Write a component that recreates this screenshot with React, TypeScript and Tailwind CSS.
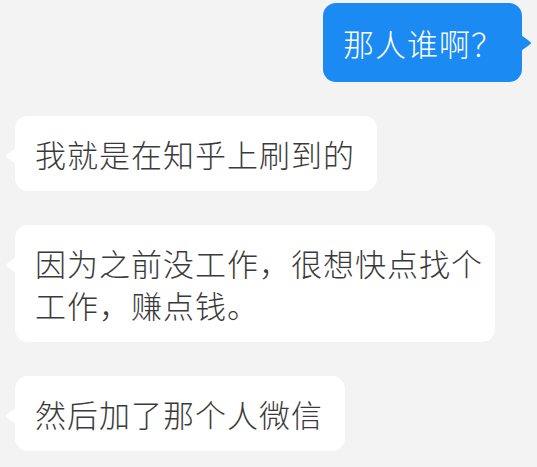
import React from 'react';

type Msg = { text: React.ReactNode; mine?: boolean; tight?: boolean };

const messages: Msg[] = [
  { text: '那人谁啊？', mine: true },
  { text: '我就是在知乎上刷到的' },
  { text: <>因为之前没工作，很想快点找个<br />工作，赚点钱。</>, tight: true },
  { text: '然后加了那个人微信' },
];

function Bubble({ text, mine, tight }: Msg) {
  if (mine) {
    return (
      <div className="flex justify-end pr-[15px]">
        <div className="relative rounded-[13px] bg-[#1c8af3] pl-5 pr-[19px] pt-[19px] pb-[18px] text-white">
          {text}
          <svg className="absolute -right-[10px] top-[32px]" width="11" height="16" viewBox="0 0 11 16">
            <path d="M0 0 L9.5 7 Q10.5 8 9.5 9 L0 16 Z" fill="#1c8af3" />
          </svg>
        </div>
      </div>
    );
  }
  return (
    <div className="flex justify-start pl-[15px]">
      <div
        className={
          'relative rounded-[13px] bg-white pl-5 pt-[17px] pb-4 text-[#3a3a3a] ' +
          (tight ? 'pr-[12px]' : 'pr-[22px]')
        }
      >
        {text}
        <svg className="absolute -left-[10px] top-[32px]" width="11" height="16" viewBox="0 0 11 16">
          <path d="M11 0 L1.5 7 Q0.5 8 1.5 9 L11 16 Z" fill="#ffffff" />
        </svg>
      </div>
    </div>
  );
}

export default function App() {
  return (
    <div
      className="flex h-[467px] w-[537px] flex-col gap-[34px] overflow-hidden bg-[#f3f3f3] pt-[3px] text-[31px] font-light leading-[42px] tracking-[1px]"
      style={{ fontFamily: '"Noto Sans CJK SC", "Noto Sans", sans-serif' }}
    >
      {messages.map((m, i) => (
        <Bubble key={i} {...m} />
      ))}
    </div>
  );
}
